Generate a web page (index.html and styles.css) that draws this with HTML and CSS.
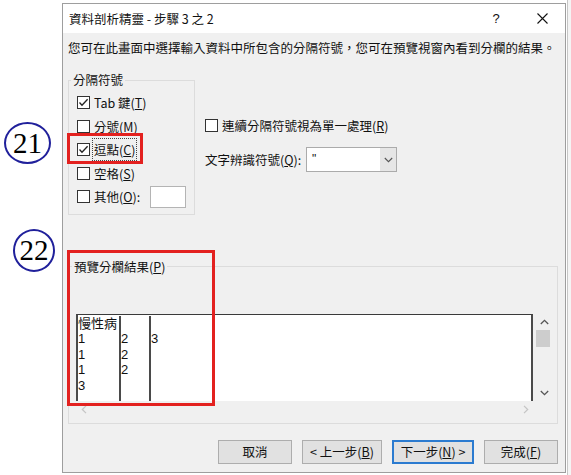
FILE: index.html
```html
<!DOCTYPE html>
<html lang="zh-Hant">
<head>
<meta charset="utf-8">
<title>資料剖析精靈</title>
<link rel="stylesheet" href="styles.css">
</head>
<body>
<div class="dialog">
  <div class="titlebar">
    <span class="title">資料剖析精靈 - 步驟 3 之 2</span>
    <span class="tb-btn help">?</span>
    <span class="tb-btn close"><svg width="11" height="11" viewBox="0 0 11 11"><path d="M0.5 0.5 L10.5 10.5 M10.5 0.5 L0.5 10.5" stroke="#111" stroke-width="1.1" fill="none"/></svg></span>
  </div>
  <div class="body">
    <p class="intro">您可在此畫面中選擇輸入資料中所包含的分隔符號，您可在預覽視窗內看到分欄的結果。</p>
    <div class="options">
      <fieldset class="group delims">
        <legend>分隔符號</legend>
        <div class="rows">
          <div class="chk-row"><span class="box"><svg width="11" height="11" viewBox="0 0 11 11"><polyline points="1.5,5.5 4,8.3 9.6,2.2" stroke="#222" stroke-width="1.3" fill="none"/></svg></span><span>Tab 鍵(<u>T</u>)</span></div>
          <div class="chk-row"><span class="box"></span><span>分號(<u>M</u>)</span></div>
          <div class="chk-row"><span class="box"><svg width="11" height="11" viewBox="0 0 11 11"><polyline points="1.5,5.5 4,8.3 9.6,2.2" stroke="#222" stroke-width="1.3" fill="none"/></svg></span><span class="focus">逗點(<u>C</u>)</span></div>
          <div class="chk-row"><span class="box"></span><span>空格(<u>S</u>)</span></div>
          <div class="chk-row"><span class="box"></span><span>其他(<u>O</u>):</span><span class="other-input"></span></div>
        </div>
      </fieldset>
      <div class="right-opts">
        <div class="chk-row single"><span class="box"></span><span>連續分隔符號視為單一處理(<u>R</u>)</span></div>
        <div class="qual-row">
          <span class="qual-label">文字辨識符號(<u>Q</u>):</span>
          <div class="combo">
            <span class="combo-val">"</span>
            <span class="combo-btn"><svg width="9" height="6" viewBox="0 0 9 6"><polyline points="0.8,1 4.5,4.7 8.2,1" stroke="#555" stroke-width="1.1" fill="none"/></svg></span>
          </div>
        </div>
      </div>
    </div>
    <fieldset class="group preview">
      <legend>預覽分欄結果(<u>P</u>)</legend>
      <div class="pv">
        <div class="pv-data">
          <div class="col c1"><div>慢性病</div><div>1</div><div>1</div><div>1</div><div>3</div></div>
          <div class="col c2"><div>&nbsp;</div><div>2</div><div>2</div><div>2</div></div>
          <div class="col c3"><div>&nbsp;</div><div>3</div></div>
        </div>
        <div class="vscroll">
          <span class="arrow"><svg width="9" height="6" viewBox="0 0 9 6"><polyline points="0.8,5 4.5,1.3 8.2,5" stroke="#555" stroke-width="1.3" fill="none"/></svg></span>
          <span class="thumb"></span>
          <span class="spacer"></span>
          <span class="arrow"><svg width="9" height="6" viewBox="0 0 9 6"><polyline points="0.8,1 4.5,4.7 8.2,1" stroke="#555" stroke-width="1.3" fill="none"/></svg></span>
        </div>
        <div class="hscroll">
          <svg width="6" height="9" viewBox="0 0 6 9"><polyline points="5,0.8 1.3,4.5 5,8.2" stroke="#c4c4c4" stroke-width="1.2" fill="none"/></svg>
          <svg width="6" height="9" viewBox="0 0 6 9"><polyline points="1,0.8 4.7,4.5 1,8.2" stroke="#c4c4c4" stroke-width="1.2" fill="none"/></svg>
        </div>
        <div class="corner"></div>
      </div>
    </fieldset>
    <div class="buttons">
      <span class="btn w74">取消</span>
      <span class="btn w80">&lt; 上一步(<u>B</u>)</span>
      <span class="btn w82 primary">下一步(<u>N</u>) &gt;</span>
      <span class="btn w74">完成(<u>F</u>)</span>
    </div>
  </div>
</div>
<div class="callout c21">21</div>
<div class="callout c22">22</div>
<div class="redbox rb1"></div>
<div class="redbox rb2"></div>
</body>
</html>
```

FILE: styles.css
```css
* { box-sizing: border-box; }
html, body { margin: 0; padding: 0; }
body {
  width: 571px;
  height: 475px;
  overflow: hidden;
  position: relative;
  background: linear-gradient(to right, transparent 567px, #c6c6c6 567px, #c6c6c6 568px, #f4f4f4 568px) #fff;
  font-family: "Noto Sans CJK TC", "Noto Sans CJK SC", sans-serif;
  font-size: 12.5px;
  color: #111;
}
u { text-decoration: underline; text-underline-offset: 1px; }

.dialog {
  margin: 3px 0 0 62px;
  width: 504px;
  height: 470px;
  border: 1px solid #9e9e9e;
  background: #f0f0f0;
  display: flex;
  flex-direction: column;
}
.titlebar {
  height: 29px;
  flex-shrink: 0;
  background: #fff;
  display: flex;
  align-items: center;
  padding-left: 6px;
}
.title { flex: 1; line-height: 16px; }
.tb-btn {
  width: 46px;
  height: 29px;
  display: flex;
  align-items: center;
  justify-content: center;
}
.help { font-family: "Liberation Sans", sans-serif; font-size: 13px; }

.body { flex: 1; padding: 0 7px 0 5px; }
.intro { margin: 7px 0 0; line-height: 16px; white-space: nowrap; }

.options { display: flex; align-items: flex-start; margin-top: 16px; }
.group { margin: 0; padding: 0; border: 1px solid #dcdcdc; min-width: 0; }
.group legend { padding: 0 2px; margin-left: 3px; line-height: 16px; }
.delims { width: 127px; flex-shrink: 0; }
.delims legend { margin-left: 2px; }
.rows { padding: 3px 8px 5px 8px; }

.chk-row { display: flex; align-items: center; height: 23.5px; white-space: nowrap; }
.box {
  width: 13px;
  height: 13px;
  flex-shrink: 0;
  border: 1px solid #333;
  background: #fff;
  margin-right: 4px;
  display: flex;
  align-items: center;
  justify-content: center;
}
.focus { outline: 1px dotted #444; outline-offset: 1px; }
.other-input {
  margin-left: auto;
  width: 36px;
  height: 22px;
  border: 1px solid #b4b4b4;
  background: #fff;
}

.right-opts { margin-left: 10px; padding-top: 43px; }
.chk-row.single { height: 20px; }
.qual-row { display: flex; align-items: center; height: 25px; margin-top: 12px; }
.qual-label { width: 101px; flex-shrink: 0; white-space: nowrap; }
.combo {
  width: 91px;
  height: 25px;
  border: 1px solid #ababab;
  background: #fff;
  display: flex;
}
.combo-val { flex: 1; padding-left: 5px; line-height: 22px; font-family: "Liberation Sans", sans-serif; font-size: 12px; }
.combo-btn {
  width: 16px;
  background: #e6e6e6;
  display: flex;
  align-items: center;
  justify-content: center;
}

.preview { width: 490px; margin-top: 44px; }
.pv {
  margin: 39px 2px 4px 7px;
  display: grid;
  grid-template-columns: 457px 22px;
  grid-template-rows: 87px 18px;
}
.pv-data {
  background: #fff;
  border-top: 1px solid #3a3a3a;
  border-left: 2px solid #4a4a4a;
  border-right: 2px solid #4a4a4a;
  display: flex;
  padding-top: 1px;
  font-family: "Liberation Sans", "Noto Sans CJK TC", sans-serif;
  font-size: 13px;
  line-height: 15.5px;
}
.col div { white-space: nowrap; }
.c1 { width: 41px; }
.c2 { width: 30px; border-left: 2px solid #4a4a4a; }
.c3 { flex: 1; border-left: 2px solid #4a4a4a; }
.vscroll { display: flex; flex-direction: column; }
.vscroll .arrow { height: 16px; display: flex; align-items: center; justify-content: center; }
.thumb { width: 14px; height: 17px; margin-left: 3px; background: #cdcdcd; }
.spacer { flex: 1; }
.hscroll {
  display: flex;
  align-items: center;
  justify-content: space-between;
  padding: 0 4px 0 5px;
}

.buttons { display: flex; justify-content: flex-end; gap: 10px; margin-top: 16px; }
.btn {
  height: 24px;
  border: 1px solid #adadad;
  background: #e1e1e1;
  display: flex;
  align-items: center;
  justify-content: center;
  white-space: nowrap;
}
.w74 { width: 74px; }
.w80 { width: 80px; }
.w82 { width: 82px; }
.btn.primary { border: 2px solid #2b7bd0; }

.callout {
  position: absolute;
  border: 2.5px solid #20209b;
  border-radius: 50%;
  display: flex;
  align-items: center;
  justify-content: center;
  font-family: "Liberation Serif", serif;
  font-size: 29px;
  line-height: 1;
  color: #000;
}
.c21 { left: 4px; top: 122px; width: 47px; height: 42px; }
.c22 { left: 13px; top: 229px; width: 42px; height: 43px; }
.redbox { position: absolute; border: 3px solid #e3211f; }
.rb1 { left: 67px; top: 133px; width: 76px; height: 31px; }
.rb2 { left: 67px; top: 250px; width: 148px; height: 156px; }
```
